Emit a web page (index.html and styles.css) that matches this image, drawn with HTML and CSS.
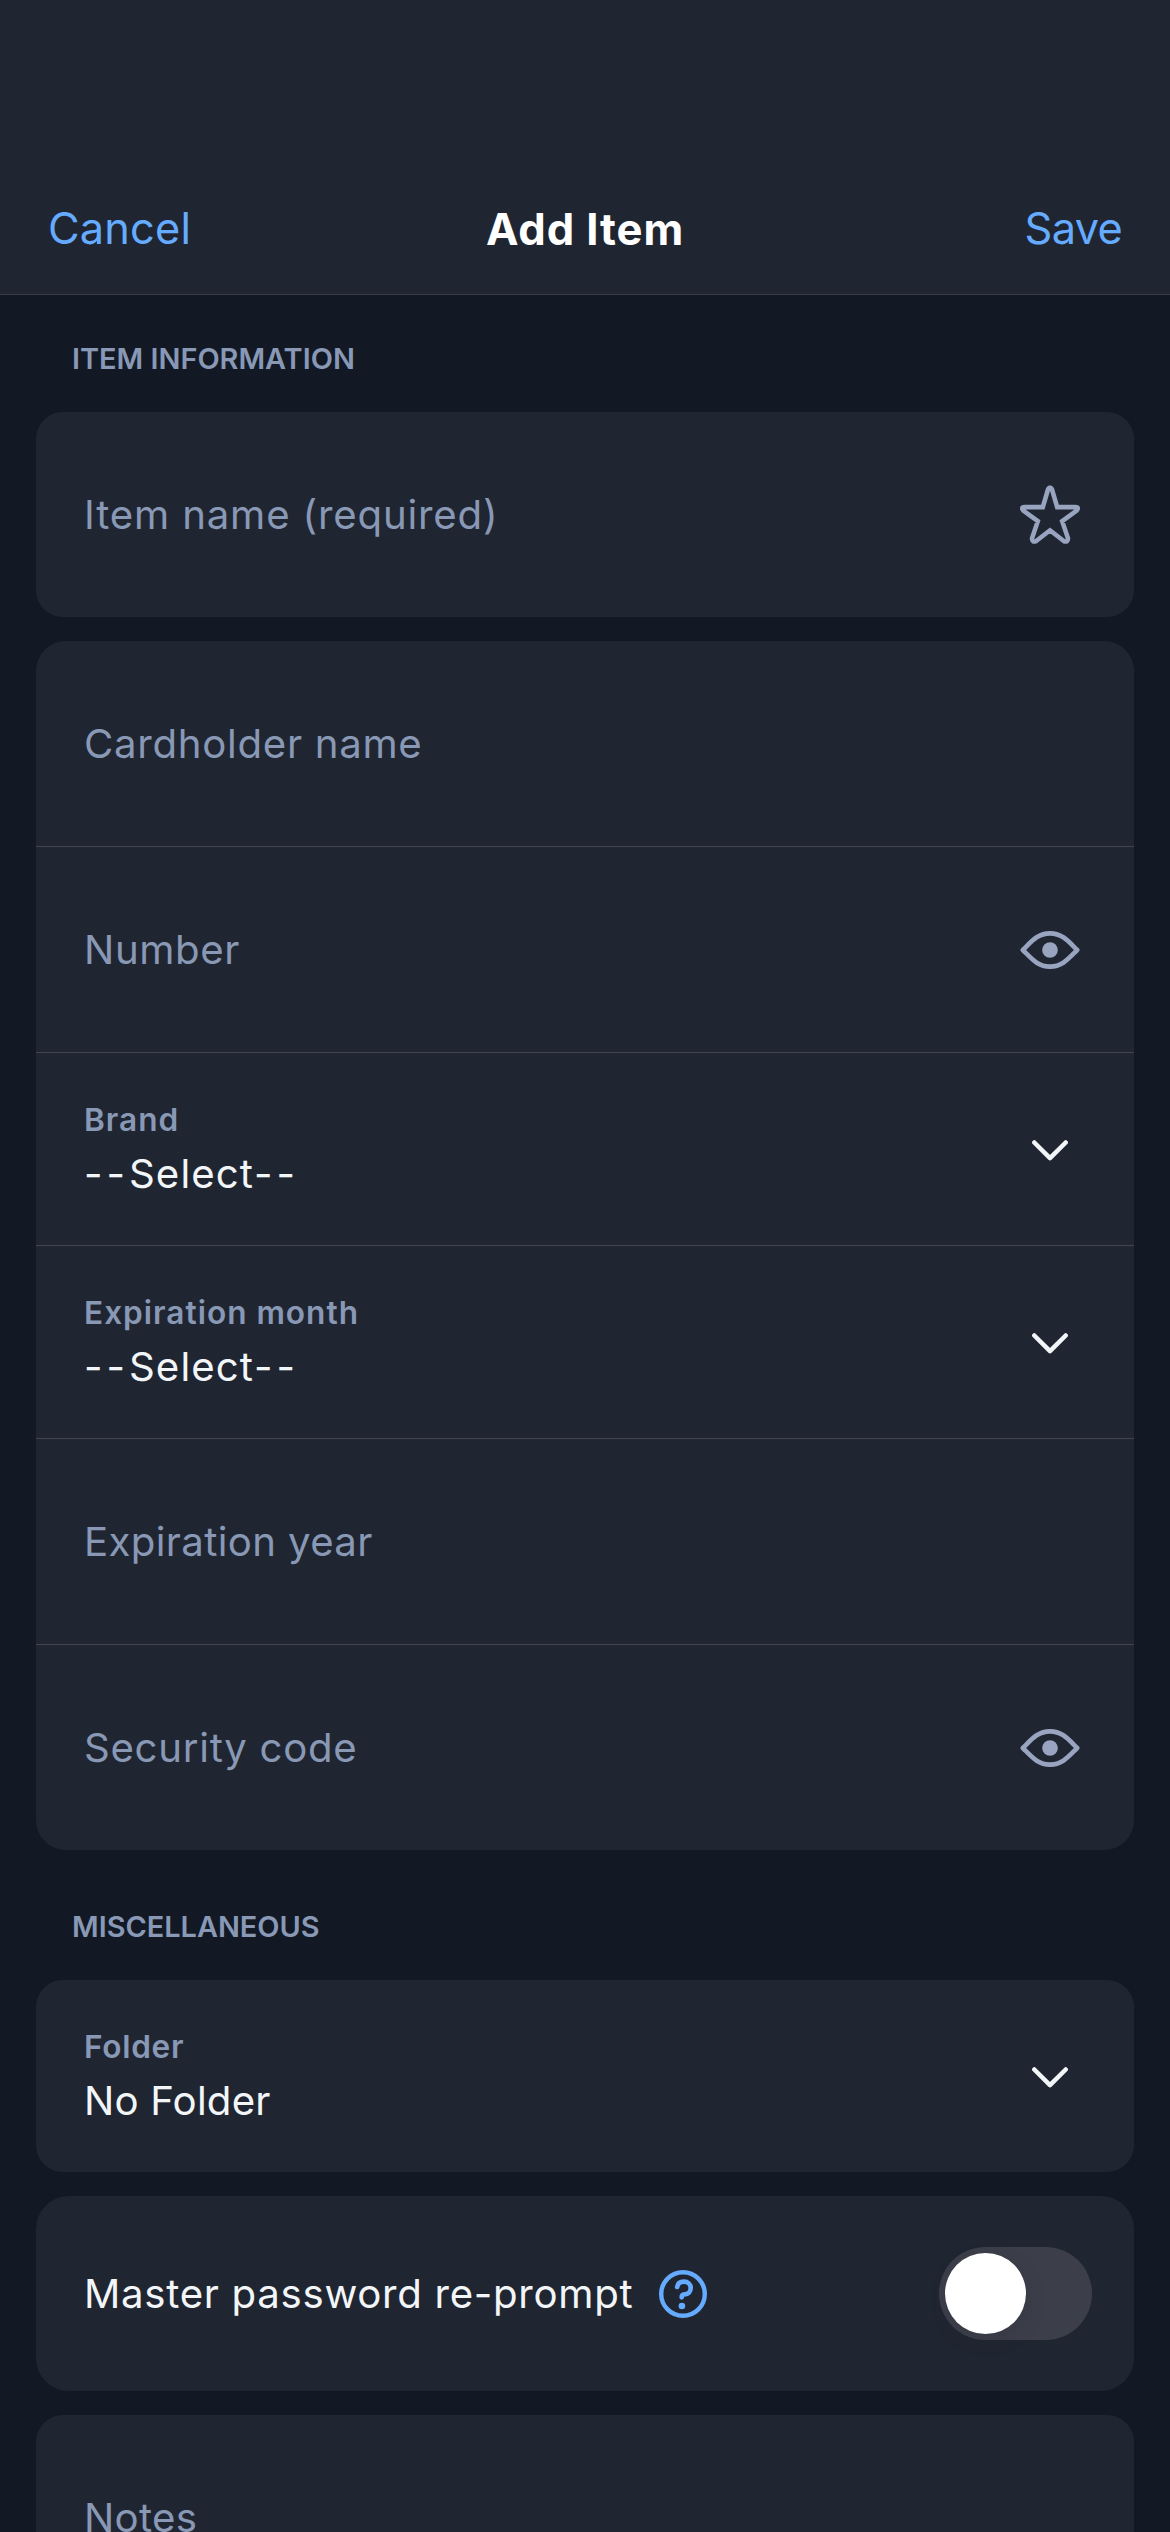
FILE: index.html
```html
<!DOCTYPE html>
<html lang="en">
<head>
<meta charset="utf-8">
<title>Add Item</title>
<link rel="stylesheet" href="styles.css">
</head>
<body>
<svg class="sprite" aria-hidden="true">
  <symbol id="eye" viewBox="0 0 60 40">
    <path d="M2.8 20C11.5 11.5 17.5 3.4 30 3.4S48.500 11.5 57.2 20C48.500 28.500 42.500 36.600 30 36.600S11.500 28.500 2.800 20Z" fill="none" stroke="currentColor" stroke-width="4.600" stroke-linejoin="round"/>
    <circle cx="30" cy="20" r="7.800" fill="currentColor"/>
  </symbol>
  <symbol id="chevron" viewBox="0 0 36 22">
    <path d="M2.300 2.500 18 18.200 33.700 2.500" fill="none" stroke="currentColor" stroke-width="4.500" stroke-linecap="round" stroke-linejoin="round"/>
  </symbol>
</svg>

<header class="nav">
  <a class="nav-link cancel">Cancel</a>
  <h1 class="nav-title">Add Item</h1>
  <a class="nav-link save">Save</a>
</header>

<main class="content">
  <h2 class="section-title first">ITEM INFORMATION</h2>
  <section class="card small">
    <div class="row tall">
      <span class="text placeholder item-name">Item name (required)</span>
      <svg class="icon star" viewBox="0 0 60 60"><path d="M28.100 4.200Q30 .8 31.900 4.200L37.200 22.100H55.300Q59.700 22.300 56.400 25.800L42.200 36.200 48 53.300Q48 57.500 44.100 56.200L30 45.300 15.900 56.200Q12 57.500 12 53.300L17.800 36.200 3.600 25.800Q.3 22.300 4.700 22.100H22.800Z" fill="none" stroke="currentColor" stroke-width="4.600" stroke-linejoin="miter"/></svg>
    </div>
  </section>

  <section class="card">
    <div class="row tall divided"><span class="text placeholder cardholder">Cardholder name</span></div>
    <div class="row tall divided">
      <span class="text placeholder number">Number</span>
      <svg class="icon eye"><use href="#eye"/></svg>
    </div>
    <div class="row select divided">
      <div class="field"><span class="label">Brand</span><span class="text choice"><span class="dash">--</span>Select<span class="dash">--</span></span></div>
      <svg class="icon chevron"><use href="#chevron"/></svg>
    </div>
    <div class="row select divided">
      <div class="field"><span class="label">Expiration month</span><span class="text choice"><span class="dash">--</span>Select<span class="dash">--</span></span></div>
      <svg class="icon chevron"><use href="#chevron"/></svg>
    </div>
    <div class="row tall divided"><span class="text placeholder year">Expiration year</span></div>
    <div class="row tall">
      <span class="text placeholder code">Security code</span>
      <svg class="icon eye"><use href="#eye"/></svg>
    </div>
  </section>

  <h2 class="section-title">MISCELLANEOUS</h2>
  <section class="card small">
    <div class="row select">
      <div class="field"><span class="label folder">Folder</span><span class="text no-folder">No Folder</span></div>
      <svg class="icon chevron"><use href="#chevron"/></svg>
    </div>
  </section>
  <section class="card large">
    <div class="row reprompt">
      <div class="with-help">
        <span class="text master">Master password re-prompt</span>
        <svg class="help" viewBox="0 0 48 48" fill="none" stroke="currentColor" stroke-linecap="round"><circle cx="24" cy="24" r="21.800" stroke-width="4.400"/><path d="M18.200 16.900C18.700 13.800 21.100 11.700 24.900 11.700C28.900 11.700 31.700 14.200 31.700 18C31.700 21.800 29.200 24.300 25.600 24.400C23.400 24.500 22.700 25.200 22.700 27.300" stroke-width="4.700"/><circle cx="22.900" cy="36" r="3.300" fill="currentColor" stroke="none"/></svg>
      </div>
      <span class="switch"><span class="knob"></span></span>
    </div>
  </section>
  <section class="card small">
    <div class="row notes-row"><span class="text placeholder notes">Notes</span></div>
  </section>
</main>
</body>
</html>
```
FILE: styles.css
```css
* { box-sizing: border-box; }

body {
  margin: 0;
  width: 1170px;
  height: 2532px;
  overflow: hidden;
  background: #121925;
  color: #f3f6f9;
  font-family: Inter, "Liberation Sans", sans-serif;
}

.sprite { display: none; }

.nav {
  height: 295px;
  padding: 166px 48px 0;
  display: grid;
  grid-template-columns: 1fr auto 1fr;
  align-items: center;
  background: #202631;
  border-bottom: 1px solid #363b47;
}
.nav-link {
  padding-bottom: 4px;
  color: #65abff;
  font-size: 43.3px;
  line-height: 60px;
}
.cancel { letter-spacing: 0.2px; }
.save { text-align: right; letter-spacing: -0.7px; }
.nav-title {
  margin: 0;
  color: #fff;
  font-size: 43.6px;
  font-weight: 700;
  line-height: 60px;
  letter-spacing: 0.9px;
}

.content {
  padding: 0 36px;
  display: flex;
  flex-direction: column;
}

.section-title {
  margin: 23px 0 0;
  padding-left: 36px;
  color: #8898b5;
  font-size: 28.9px;
  font-weight: 600;
  line-height: 107px;
  letter-spacing: 0;
}
.section-title.first { margin-top: 10px; }

.card { border-radius: 30px; background: #202631; }
.card.small { border-radius: 27px; }
.card.large { border-radius: 33px; }
.card + .card { margin-top: 24px; }

.row {
  padding: 0 54px 0 48px;
  display: flex;
  align-items: center;
  justify-content: space-between;
}
.tall { height: 205px; }
.select { height: 192px; }
.divided { box-sizing: content-box; border-bottom: 1px solid #42444e; }
.reprompt { height: 195px; padding-right: 42px; }
.notes-row { height: 205px; }

.text { font-size: 40.2px; line-height: 64px; white-space: nowrap; }
.placeholder { color: #8898b5; }
.field { display: flex; flex-direction: column; padding-top: 4px; }
.label {
  color: #8898b5;
  font-size: 31.6px;
  font-weight: 600;
  line-height: 45px;
  letter-spacing: 1px;
}

/* Tracking per string */
.item-name { letter-spacing: 0.82px; }
.cardholder, .master, .code, .label.folder { letter-spacing: 0.7px; }
.number { letter-spacing: 0.6px; }
.choice { letter-spacing: 1.1px; }
.dash { letter-spacing: 4px; }
.year { letter-spacing: 0.35px; }
.no-folder { letter-spacing: 0.2px; }
.notes { letter-spacing: 0.3px; }

.icon { color: #99a5c0; flex: none; }
.star { width: 60px; height: 60px; }
.eye { width: 60px; height: 40px; }
.chevron { width: 36px; height: 22px; margin: 3px 12px 0 0; color: #f3f6f9; }

.with-help { display: flex; align-items: center; gap: 26px; }
.help { width: 48px; height: 48px; color: #65abff; }

.switch {
  width: 153px;
  height: 93px;
  padding: 6px;
  border-radius: 47px;
  background: #3c3f4a;
}
.knob {
  display: block;
  width: 81px;
  height: 81px;
  border-radius: 50%;
  background: #fff;
  box-shadow: 2px 6px 18px rgba(40, 30, 50, 0.18);
}
```
